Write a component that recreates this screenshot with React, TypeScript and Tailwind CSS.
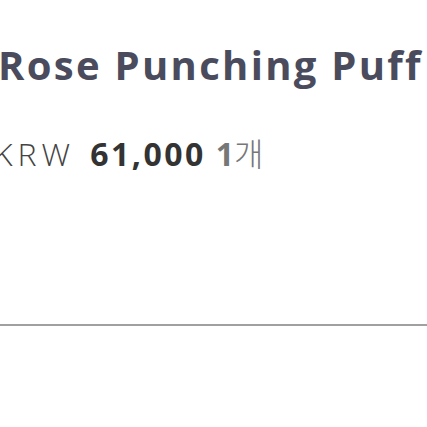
export default function App() {
  return (
    <div className="w-[427px] h-[427px] overflow-hidden bg-white font-['Open_Sans',sans-serif]">
      <div className="pt-[40px] -ml-[2px] whitespace-nowrap">
        <h1 className="text-[40px] leading-[50px] font-bold text-[#4a4b5c] tracking-[2.3px]">
          Rose Punching Puff
        </h1>
        <div className="mt-[42px] -ml-[4px] flex items-baseline gap-[12px] text-[32px] leading-[40px]">
          <span className="font-light text-[#444] tracking-[5px]">KRW</span>
          <span className="font-bold text-[#333] tracking-[2.5px] ml-[3px]">61,000</span>
          <span className="text-[#777] -ml-[2px]">
            <span className="font-bold">1</span>
            <span className="font-['Noto_Sans_CJK_KR',sans-serif] font-light">개</span>
          </span>
        </div>
      </div>
      <div className="mt-[150px] h-[2px] bg-[#a0a0a0]" />
    </div>
  );
}
